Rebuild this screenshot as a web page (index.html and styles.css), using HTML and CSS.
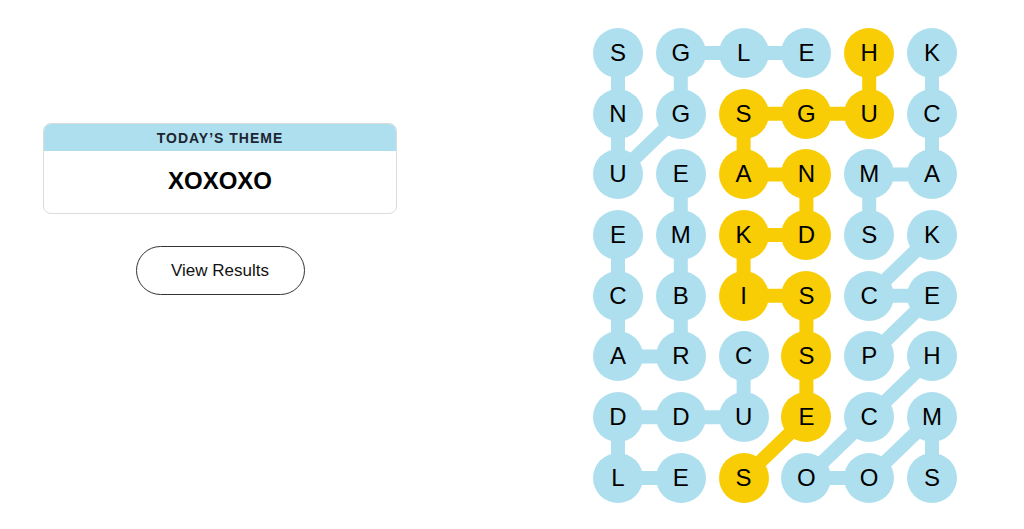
FILE: index.html
```html
<!DOCTYPE html>
<html lang="en">
<head>
  <meta charset="UTF-8">
  <meta name="viewport" content="width=device-width, initial-scale=1.0">
  <title>Strands</title>
  <link rel="stylesheet" href="styles.css">
</head>
<body>
  <section class="intro">
    <div class="theme-card">
      <div class="theme-label">Today’s Theme</div>
      <div class="theme-name">XOXOXO</div>
    </div>
    <button class="results-btn">View Results</button>
  </section>

  <section class="board">
    <!-- found word paths, drawn under the letters -->
    <svg class="paths" width="364" height="475" viewBox="0 0 364 475">
      <g class="found">
        <polyline points="25,25 25,85.7 25,146.4 87.8,85.7 87.8,25 150.6,25 213.4,25"/>
        <polyline points="276.2,207.1 276.2,146.4 339,146.4 339,85.7 339,25"/>
        <polyline points="87.8,146.4 87.8,207.1 87.8,267.8 87.8,328.5 25,328.5 25,267.8 25,207.1"/>
        <polyline points="150.6,328.5 150.6,389.2 87.8,389.2 25,389.2 25,449.9 87.8,449.9"/>
        <polyline points="276.2,328.5 339,267.8 276.2,267.8 339,207.1"/>
        <polyline points="339,449.9 339,389.2 276.2,449.9 213.4,449.9 276.2,389.2 339,328.5"/>
      </g>
      <g class="spangram">
        <polyline points="276.2,25 276.2,85.7 213.4,85.7 150.6,85.7 150.6,146.4 213.4,146.4 213.4,207.1 150.6,207.1 150.6,267.8 213.4,267.8 213.4,328.5 213.4,389.2 150.6,449.9"/>
      </g>
    </svg>
    <div class="grid" id="grid"></div>
  </section>

  <script>
    const rows = ['SGLEHK','NGSGUC','UEANMA','EMKDSK','CBISCE','ARCSPH','DDUECM','LESOOS'];
    // cells that belong to the spangram (row, col)
    const span = ['0,4','1,2','1,3','1,4','2,2','2,3','3,2','3,3','4,2','4,3','5,3','6,3','7,2'];
    const grid = document.getElementById('grid');
    rows.forEach((row, r) => {
      [...row].forEach((ch, c) => {
        const cell = document.createElement('div');
        cell.className = 'cell' + (span.includes(r + ',' + c) ? ' gold' : '');
        cell.textContent = ch;
        grid.appendChild(cell);
      });
    });
  </script>
</body>
</html>
```

FILE: styles.css
```css
*{margin:0;padding:0;box-sizing:border-box}
body{font-family:'Liberation Sans',Arial,sans-serif;background:#fff;color:#121212;display:flex;align-items:flex-start;min-height:100vh}
.intro{width:354px;margin:123px 0 0 43px;display:flex;flex-direction:column;align-items:center}
.theme-card{width:100%;border:1px solid #dcdcdc;border-radius:8px;overflow:hidden}
.theme-label{height:27px;line-height:28px;background:#aedfee;text-align:center;font-size:14px;font-weight:700;letter-spacing:1px;text-transform:uppercase;color:#1c2530}
.theme-name{height:62px;line-height:60px;text-align:center;font-size:24px;font-weight:700;color:#000}
.results-btn{margin-top:32px;width:169px;height:49px;border:1px solid #333;border-radius:25px;background:#fff;font-family:inherit;font-size:17px;color:#121212;cursor:pointer}
.board{position:relative;margin:28px 0 0 196px;width:364px;height:475px}
.paths{position:absolute;left:0;top:0}
.paths polyline{fill:none;stroke-width:14;stroke-linejoin:round;stroke-linecap:round}
.found polyline{stroke:#aedfee}
.spangram polyline{stroke:#f8cd05}
.grid{position:relative;display:grid;grid-template-columns:repeat(6,50px);grid-auto-rows:50px;column-gap:12.8px;row-gap:10.7px}
.cell{width:50px;height:50px;border-radius:50%;background:#aedfee;display:flex;align-items:center;justify-content:center;font-size:24px;color:#000}
.cell.gold{background:#f8cd05}
```
